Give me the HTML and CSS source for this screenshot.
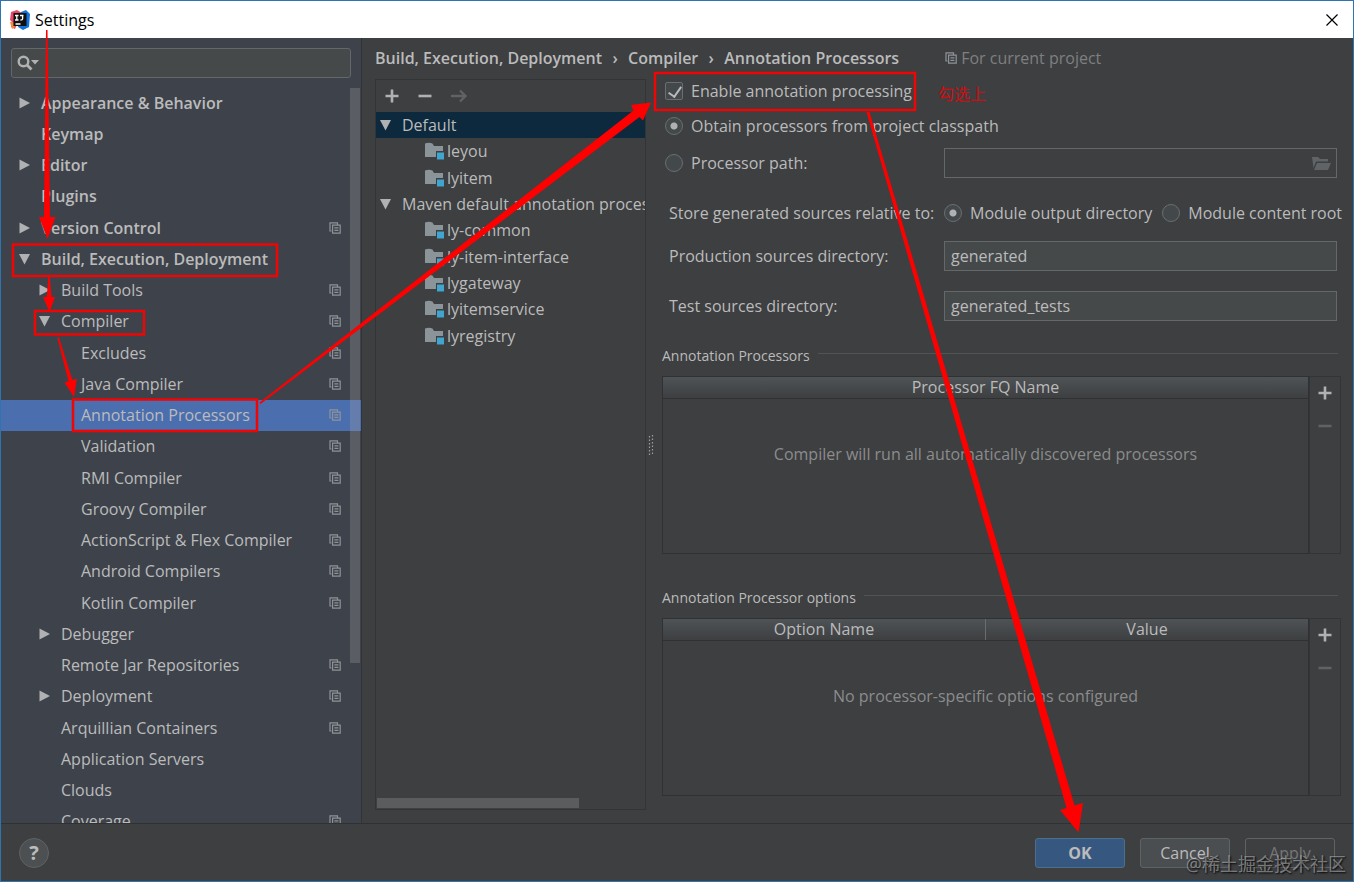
FILE: index.html
```html
<!DOCTYPE html>
<html lang="en">
<head>
  <meta charset="UTF-8">
  <meta name="viewport" content="width=device-width, initial-scale=1.0">
  <title>Settings</title>
  <link rel="stylesheet" href="styles.css">
</head>
<body>
  <!-- shared icons -->
  <svg class="defs" width="0" height="0">
    <symbol id="right" viewBox="0 0 12 12"><path d="M0.5 0.5L11 6L0.5 11.5z"/></symbol>
    <symbol id="down" viewBox="0 0 12 12"><path d="M0 1h11L5.5 11.5z"/></symbol>
    <symbol id="copy" viewBox="0 0 12 12">
      <path d="M2.5 9H1V0.8h7.5V2.5M3.6 3.2h7.6v8H3.6zM5.4 5.9h4M5.4 8.4h4" fill="none" stroke="currentColor" stroke-width="1.2"/>
    </symbol>
    <symbol id="module" viewBox="0 0 19 18">
      <path d="M0 1.5q4-1.5 7.5 0L9 4h9v5h-7v6H0z" fill="#8b9499"/>
      <path d="M12 10.5h7v7h-7z" fill="#40a5cf"/>
    </symbol>
    <symbol id="plus" viewBox="0 0 14 14"><path d="M7 0.5v13M0.5 7h13" stroke="currentColor" stroke-width="2.6"/></symbol>
    <symbol id="minus" viewBox="0 0 14 14"><path d="M0.5 7h13" stroke="currentColor" stroke-width="2.6"/></symbol>
  </svg>

  <div class="window">
    <div class="titlebar">
      <svg class="logo" width="20" height="20" viewBox="0 0 20 20">
        <path d="M1 2l6-2 5 3-7 16-4-2 1-5-2-2z" fill="#e8476a"/>
        <path d="M0 12l3 0 2 5-3 2z" fill="#f58a3c"/>
        <path d="M11 2l5-2 4 4-1 13-6 3-5-3z" fill="#1273d8"/>
        <path d="M3.5 3h13v13h-13z" fill="#111"/>
        <path d="M5 5.5h3.5M6.8 5.5v4.5M5 10h3.5M10 5.5h3.5M12.6 5.5v3.5q0 1-2.2 1M5.5 14h5" stroke="#fff" stroke-width="1.3" fill="none"/>
      </svg>
      <span class="title">Settings</span>
      <button class="close" aria-label="Close">
        <svg width="12" height="12" viewBox="0 0 12 12"><path d="M0.5 0.5l11 11M11.5 0.5l-11 11" stroke="#000" stroke-width="1.2"/></svg>
      </button>
    </div>

    <div class="content">
      <div class="aside">
        <label class="search">
          <svg width="23" height="16" viewBox="0 0 23 16">
            <circle cx="6.5" cy="6.5" r="4.8" fill="none" stroke="#afb1b3" stroke-width="2.4"/>
            <path d="M10 10l4.5 4.5" stroke="#afb1b3" stroke-width="2.8"/>
            <path d="M14 5h8l-4 4.5z" fill="#afb1b3"/>
          </svg>
          <input type="text" aria-label="Search settings">
        </label>
        <div class="tree">
          <ul class="nav">
            <li class="top"><svg class="arrow"><use href="#right"/></svg>Appearance &amp; Behavior</li>
            <li class="top"><i class="arrow"></i>Keymap</li>
            <li class="top"><svg class="arrow"><use href="#right"/></svg>Editor</li>
            <li class="top"><i class="arrow"></i>Plugins</li>
            <li class="top"><svg class="arrow"><use href="#right"/></svg>Version Control<svg class="copy"><use href="#copy"/></svg></li>
            <li class="top"><svg class="arrow"><use href="#down"/></svg>Build, Execution, Deployment</li>
            <li class="sub"><svg class="arrow"><use href="#right"/></svg>Build Tools<svg class="copy"><use href="#copy"/></svg></li>
            <li class="sub"><svg class="arrow"><use href="#down"/></svg>Compiler<svg class="copy"><use href="#copy"/></svg></li>
            <li class="leaf">Excludes<svg class="copy"><use href="#copy"/></svg></li>
            <li class="leaf">Java Compiler<svg class="copy"><use href="#copy"/></svg></li>
            <li class="leaf active">Annotation Processors<svg class="copy"><use href="#copy"/></svg></li>
            <li class="leaf">Validation<svg class="copy"><use href="#copy"/></svg></li>
            <li class="leaf">RMI Compiler<svg class="copy"><use href="#copy"/></svg></li>
            <li class="leaf">Groovy Compiler<svg class="copy"><use href="#copy"/></svg></li>
            <li class="leaf">ActionScript &amp; Flex Compiler<svg class="copy"><use href="#copy"/></svg></li>
            <li class="leaf">Android Compilers<svg class="copy"><use href="#copy"/></svg></li>
            <li class="leaf">Kotlin Compiler<svg class="copy"><use href="#copy"/></svg></li>
            <li class="sub"><svg class="arrow"><use href="#right"/></svg>Debugger</li>
            <li class="sub"><i class="arrow"></i>Remote Jar Repositories<svg class="copy"><use href="#copy"/></svg></li>
            <li class="sub"><svg class="arrow"><use href="#right"/></svg>Deployment<svg class="copy"><use href="#copy"/></svg></li>
            <li class="sub"><i class="arrow"></i>Arquillian Containers<svg class="copy"><use href="#copy"/></svg></li>
            <li class="sub"><i class="arrow"></i>Application Servers</li>
            <li class="sub"><i class="arrow"></i>Clouds</li>
            <li class="sub"><i class="arrow"></i>Coverage<svg class="copy"><use href="#copy"/></svg></li>
          </ul>
          <div class="scroll_y"></div>
        </div>
      </div>

      <div class="main">
        <div class="crumbs">
          <span>Build, Execution, Deployment</span><i>›</i><span>Compiler</span><i>›</i><span>Annotation Processors</span>
          <div class="scope"><svg class="copy"><use href="#copy"/></svg>For current project</div>
        </div>

        <div class="panes">
          <div class="profiles">
            <div class="tools">
              <button aria-label="Add profile"><svg width="14" height="14"><use href="#plus"/></svg></button>
              <button aria-label="Remove profile"><svg width="14" height="14"><use href="#minus"/></svg></button>
              <button aria-label="Move to" disabled><svg width="18" height="14" viewBox="0 0 18 14"><path d="M0 7h14M9 1.5l5.5 5.5-5.5 5.5" fill="none" stroke="currentColor" stroke-width="2.4"/></svg></button>
            </div>
            <ul class="modules">
              <li class="group active"><svg class="arrow"><use href="#down"/></svg>Default</li>
              <li class="module"><svg><use href="#module"/></svg>leyou</li>
              <li class="module"><svg><use href="#module"/></svg>lyitem</li>
              <li class="group"><svg class="arrow"><use href="#down"/></svg><span>Maven default annotation processors</span></li>
              <li class="module"><svg><use href="#module"/></svg>ly-common</li>
              <li class="module"><svg><use href="#module"/></svg>ly-item-interface</li>
              <li class="module"><svg><use href="#module"/></svg>lygateway</li>
              <li class="module"><svg><use href="#module"/></svg>lyitemservice</li>
              <li class="module"><svg><use href="#module"/></svg>lyregistry</li>
            </ul>
            <div class="scroll_x"></div>
          </div>

          <div class="splitter">
            <svg width="6" height="20" viewBox="0 0 6 20"><path d="M1.5 1v19M4.5 0v19" stroke="#9b9d9e" stroke-width="1.2" stroke-dasharray="1.5 2"/></svg>
          </div>

          <form class="options">
            <div class="row enable">
              <label><input type="checkbox" checked>Enable annotation processing</label>
            </div>
            <div class="row obtain">
              <label><input type="radio" name="source" checked>Obtain processors from project classpath</label>
            </div>
            <div class="row path">
              <label><input type="radio" name="source">Processor path:</label>
              <div class="field">
                <input type="text" class="text" aria-label="Processor path" disabled>
                <svg width="19" height="15" viewBox="0 0 19 15"><path d="M0 1h6l2 2h8v2.5H4L1.5 12zM5 7h14l-3 7H2z" fill="#606466"/></svg>
              </div>
            </div>
            <div class="row store">
              <span class="name">Store generated sources relative to:</span>
              <div class="choices">
                <label><input type="radio" name="relative" checked>Module output directory</label>
                <label><input type="radio" name="relative">Module content root</label>
              </div>
            </div>
            <div class="row production">
              <label class="name" for="production">Production sources directory:</label>
              <div class="field"><input type="text" class="text" id="production" value="generated"></div>
            </div>
            <div class="row test">
              <label class="name" for="test">Test sources directory:</label>
              <div class="field"><input type="text" class="text" id="test" value="generated_tests"></div>
            </div>

            <h2 class="first">Annotation Processors</h2>
            <div class="list">
              <div class="grid">
                <table>
                  <thead><tr><th>Processor FQ Name</th></tr></thead>
                </table>
                <p>Compiler will run all automatically discovered processors</p>
              </div>
              <div class="side">
                <button type="button" aria-label="Add processor"><svg width="14" height="14"><use href="#plus"/></svg></button>
                <button type="button" aria-label="Remove processor" disabled><svg width="14" height="14"><use href="#minus"/></svg></button>
              </div>
            </div>

            <h2>Annotation Processor options</h2>
            <div class="list">
              <div class="grid">
                <table>
                  <thead><tr><th>Option Name</th><th>Value</th></tr></thead>
                </table>
                <p>No processor-specific options configured</p>
              </div>
              <div class="side">
                <button type="button" aria-label="Add option"><svg width="14" height="14"><use href="#plus"/></svg></button>
                <button type="button" aria-label="Remove option" disabled><svg width="14" height="14"><use href="#minus"/></svg></button>
              </div>
            </div>
          </form>
        </div>
      </div>
    </div>

    <div class="footer">
      <button class="help" aria-label="Help">?</button>
      <button class="btn ok">OK</button>
      <button class="btn">Cancel</button>
      <button class="btn apply" disabled>Apply</button>
    </div>
  </div>

  <!-- red marks drawn over the window -->
  <svg class="marks" width="1354" height="882" viewBox="0 0 1354 882">
    <g fill="none" stroke="#f00505" stroke-width="2.5">
      <rect x="13" y="244.5" width="264" height="31.5"/>
      <rect x="35" y="311" width="109" height="23.5"/>
      <rect x="73" y="399.5" width="184" height="31.5"/>
      <rect x="655" y="73" width="260" height="37"/>
    </g>
    <g fill="#fe0000">
      <path d="M46 30h1.5L50 217h5.5L47.5 239L39 217h5z"/>
      <path d="M48.3 277h1.4l1.8 20h3.5L49.5 312L43 297h3.8z"/>
      <path d="M57.3 337.5l1.5-.5L72.3 380l4.5-1.3L74 397L64.5 382.5l4-1.2z"/>
      <path d="M259.5 402.5L633.5 110.5L631 105L651 102.5L643 120.5L639.5 117L260.5 404z"/>
      <path d="M866.5 112h3L1074.5 805.5L1083 803L1078.5 832.5L1060 810L1066.5 808z"/>
    </g>
  </svg>
  <span class="note">勾选上</span>
  <span class="watermark">@稀土掘金技术社区</span>
</body>
</html>
```
FILE: styles.css
```css
* {
  margin: 0;
  padding: 0;
  box-sizing: border-box;
}

html,
body {
  width: 100%;
  height: 100%;
  overflow: hidden;
}

body {
  position: relative;
  font: 16px/20px "Open Sans", "Noto Sans", "Noto Sans CJK SC", sans-serif;
  color: #bbbbbb;
  background-color: #3d3f41;
}

ul {
  list-style: none;
}

input,
button {
  font: inherit;
  color: inherit;
}

button {
  border: none;
  background: none;
}

.defs {
  position: absolute;
}

.window {
  display: flex;
  flex-direction: column;
  height: 100%;
  border: 1px solid #2e74ae;
}

/* title bar */
.titlebar {
  display: flex;
  align-items: center;
  height: 37px;
  padding: 0 15px 0 9px;
  color: #000;
  background-color: #fff;
}

.titlebar .title {
  flex: 1;
  margin-left: 5px;
}

.titlebar .close {
  display: flex;
}

.content {
  display: flex;
  flex: 1;
  min-height: 0;
}

/* settings tree */
.aside {
  display: flex;
  flex-direction: column;
  width: 361px;
  padding-top: 10px;
  border-right: 1px solid #313335;
  background-color: #3e434b;
}

.search {
  display: flex;
  align-items: center;
  height: 30px;
  margin: 0 10px 9px;
  padding: 0 5px;
  border: 1px solid #646769;
  border-radius: 3px;
  background-color: #45494a;
}

.search input {
  flex: 1;
  min-width: 0;
  border: none;
  outline: none;
  background: none;
}

.tree {
  position: relative;
  flex: 1;
  min-height: 0;
  overflow: hidden;
}

.nav {
  display: grid;
  grid-auto-rows: 1fr;
  height: 750px;
}

.nav li {
  display: flex;
  align-items: center;
  padding: 0 20px 0 18px;
  white-space: nowrap;
}

.nav .top {
  font-weight: 600;
}

.nav .sub {
  padding-left: 38px;
}

.nav .leaf {
  padding-left: 80px;
}

.nav .active {
  background-color: #4b6eaf;
}

.arrow {
  width: 12px;
  height: 12px;
  margin-right: 10px;
  fill: #afb1b3;
}

.copy {
  width: 12px;
  height: 12px;
  color: #8f9398;
}

.nav .copy {
  margin-left: auto;
}

.scroll_y {
  position: absolute;
  top: 1px;
  right: 1px;
  width: 10px;
  height: 575px;
  background-color: rgba(166,166,166,.28);
}

/* right part */
.main {
  display: flex;
  flex-direction: column;
  flex: 1;
  min-width: 0;
  padding: 10px 12px 13px 13px;
}

.crumbs {
  display: flex;
  align-items: center;
  height: 20px;
  font-weight: 600;
  white-space: nowrap;
}

.crumbs i {
  width: 26px;
  text-align: center;
  font-style: normal;
}

.scope {
  display: flex;
  align-items: center;
  gap: 4px;
  margin-left: 46px;
  font-weight: normal;
  color: #7d7f80;
}

.panes {
  display: flex;
  flex: 1;
  min-height: 0;
}

.profiles {
  display: flex;
  flex-direction: column;
  width: 271px;
  margin-top: 11px;
  border: 1px solid #323435;
}

.tools {
  display: flex;
  align-items: center;
  gap: 19px;
  height: 32px;
  padding-left: 9px;
  color: #afb1b3;
}

.tools button,
.side button {
  display: flex;
}

button:disabled {
  color: #606263;
}

.modules {
  display: grid;
  grid-template-columns: minmax(0, 1fr);
  grid-auto-rows: 1fr;
  height: 237px;
}

.modules li {
  display: flex;
  align-items: center;
  white-space: nowrap;
}

.modules .group {
  padding-left: 4px;
}

.modules .group span {
  overflow: hidden;
}

.modules .arrow {
  flex: none;
}

.modules .module {
  padding-left: 49px;
}

.modules .module svg {
  width: 19px;
  height: 18px;
  margin-right: 3px;
}

.modules .active {
  background-color: #0d293e;
}

.scroll_x {
  width: 75%;
  height: 10px;
  margin: auto 1px 1px;
  background-color: #5a5c5e;
}

.splitter {
  display: flex;
  align-items: center;
  justify-content: center;
  width: 16px;
  padding: 11px 6px 0 0;
}

/* form */
.options {
  display: flex;
  flex-direction: column;
  flex: 1;
  min-width: 0;
  padding: 8px 0 14px;
}

.row {
  display: grid;
  grid-template-columns: 282px 1fr;
  align-items: center;
  height: 30px;
  white-space: nowrap;
}

.row label {
  display: flex;
  align-items: center;
}

.row .name {
  padding-left: 7px;
}

.obtain {
  margin-top: 5px;
}

.path {
  margin-top: 7px;
}

.store {
  margin-top: 20px;
}

.production {
  margin-top: 13px;
}

.test {
  margin-top: 20px;
}

input[type="checkbox"],
input[type="radio"] {
  appearance: none;
  flex: none;
  width: 18px;
  height: 18px;
  margin: 0 8px 0 3px;
  border: 1px solid #6b6e70;
  background-color: #43494a;
}

input[type="checkbox"] {
  border-radius: 2px;
}

input[type="checkbox"]::before {
  content: "";
  display: block;
  width: 6px;
  height: 11px;
  margin: 1px 5px;
  border: solid #bbbbbb;
  border-width: 0 2px 2px 0;
  transform: rotate(35deg);
}

input[type="radio"] {
  border-radius: 50%;
}

input[type="radio"]:checked {
  background-image: radial-gradient(circle, #afb1b3 3px, transparent 4px);
}

.choices {
  display: flex;
  gap: 10px;
}

.choices input[type="radio"] {
  margin-left: 0;
}

.field {
  display: flex;
  align-items: center;
  margin-right: 4px;
}

.field .text {
  width: 100%;
  height: 30px;
  padding: 0 6px;
  border: 1px solid #646869;
  outline: none;
  background-color: #45494a;
}

.field .text:disabled {
  background-color: #3d3f41;
}

.field svg {
  flex: none;
  margin-left: -25px;
}

.options h2 {
  display: flex;
  align-items: center;
  gap: 8px;
  height: 20px;
  margin: 34px 3px 10px 0;
  font-size: 14px;
  font-weight: normal;
}

.options h2.first {
  margin-top: 25px;
}

.options h2::after {
  content: "";
  flex: 1;
  height: 1px;
  margin-bottom: 5px;
  background-color: #515455;
}

.list {
  display: flex;
  flex: 1;
}

.grid {
  flex: 1;
  border: 1px solid #2f3132;
}

.grid table {
  width: 100%;
  table-layout: fixed;
  border-collapse: collapse;
}

.grid th {
  height: 21px;
  border-bottom: 1px solid #2f3132;
  font-weight: normal;
  background-image: linear-gradient(#4f5355, #3d3f41);
}

.grid th + th {
  border-left: 1px solid #6a6d6f;
}

.grid p {
  margin-top: 45px;
  text-align: center;
  color: #8c8c8c;
}

.side {
  display: flex;
  flex-direction: column;
  align-items: center;
  gap: 19px;
  width: 32px;
  padding-top: 9px;
  border: 1px solid #323435;
  color: #afb1b3;
}

/* bottom buttons */
.footer {
  display: flex;
  align-items: center;
  gap: 15px;
  height: 58px;
  padding: 0 18px;
  border-top: 1px solid #2f3132;
}

.help {
  width: 30px;
  height: 30px;
  margin-right: auto;
  border: 1px solid #5e6364;
  border-radius: 50%;
  font-size: 20px;
  font-weight: bold;
  background-color: #4c5052;
}

.btn {
  width: 90px;
  height: 30px;
  border: 1px solid #5e6364;
  border-radius: 3px;
  background-color: #4a4e50;
}

.btn.ok {
  border-color: #4c708c;
  font-weight: bold;
  background-color: #365880;
}

.btn.apply {
  color: #777;
  background: none;
}

/* marks over the window */
.marks {
  position: absolute;
  left: 0;
  top: 0;
  pointer-events: none;
}

.note {
  position: absolute;
  left: 938px;
  top: 84px;
  color: #d40b10;
}

.watermark {
  position: absolute;
  right: 8px;
  bottom: 8px;
  font-size: 18px;
  color: rgba(255,255,255,.4);
  text-shadow: 1px 1px 2px #000;
}
```
